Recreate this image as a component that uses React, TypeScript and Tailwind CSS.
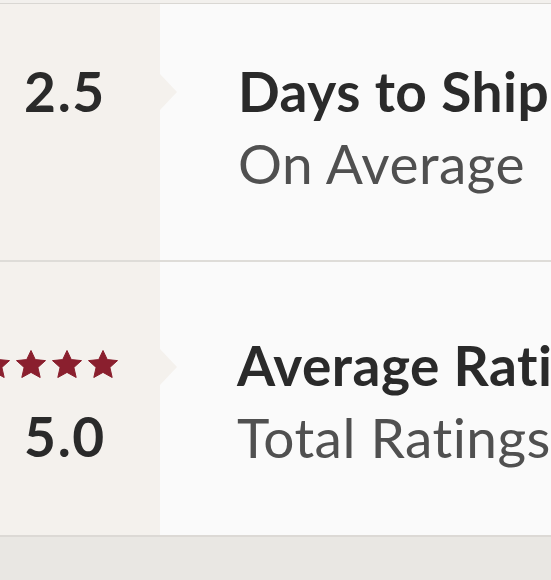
const STAR_COUNT = 4;

function Star() {
  return (
    <svg viewBox="0 0 30 28" className="h-[28px] w-[30px] shrink-0">
      <polygon
        points="15,0.5 19.3,9.6 29.5,10.6 21.9,17.4 24.2,27.5 15,22.4 5.8,27.5 8.1,17.4 0.5,10.6 10.7,9.6"
        fill="#8a1f2e"
        stroke="#8a1f2e"
        strokeWidth="1"
        strokeLinejoin="round"
      />
    </svg>
  );
}

function Notch({ top }: { top: string }) {
  return (
    <div
      className={`absolute left-[160px] ${top} h-0 w-0 border-y-[18px] border-l-[17px] border-y-transparent border-l-[#f4f1ed]`}
    />
  );
}

export default function App() {
  return (
    <div className="h-[580px] w-[551px] overflow-hidden bg-[#e9e7e3] font-['Lato','Liberation_Sans',sans-serif]">
      <div className="h-[3px] bg-[#f2f0ed]" />
      <div className="border-t border-[#d9d7d3]">
        {/* shipping row */}
        <div className="relative flex h-[258px] border-b-2 border-[#dedcd8]">
          <div className="w-[160px] shrink-0 bg-[#f4f1ed] pt-[51px]">
            <p className="w-[130px] text-center text-[55px] font-bold leading-[72px] tracking-[0.03em] text-[#2a2a2a]">2.5</p>
          </div>
          <Notch top="top-[70px]" />
          <div className="flex-1 whitespace-nowrap bg-[#fafafa] pl-[78px] pt-[51px] tracking-[0.03em]">
            <p className="text-[55px] font-bold leading-[72px] text-[#2a2a2a]">Days to Ship</p>
            <p className="text-[55px] leading-[72px] text-[#505050]">On Average</p>
          </div>
        </div>

        {/* ratings row */}
        <div className="relative flex h-[275px] border-b-2 border-[#dcd9d5]">
          <div className="w-[160px] shrink-0 bg-[#f4f1ed] pt-[88px]">
            <div className="-ml-[20px] flex gap-[6px]">
              {Array.from({ length: STAR_COUNT }).map((_, i) => (
                <Star key={i} />
              ))}
            </div>
            <p className="mt-[22px] w-[130px] text-center text-[55px] font-bold leading-[72px] tracking-[0.03em] text-[#2a2a2a]">5.0</p>
          </div>
          <Notch top="top-[87px]" />
          <div className="flex-1 whitespace-nowrap bg-[#fafafa] pl-[77px] pt-[67px] tracking-[0.03em]">
            <p className="text-[55px] font-bold leading-[72px] text-[#2a2a2a]">Average Rating</p>
            <p className="text-[55px] leading-[72px] text-[#505050]">Total Ratings: 12</p>
          </div>
        </div>
      </div>
    </div>
  );
}
